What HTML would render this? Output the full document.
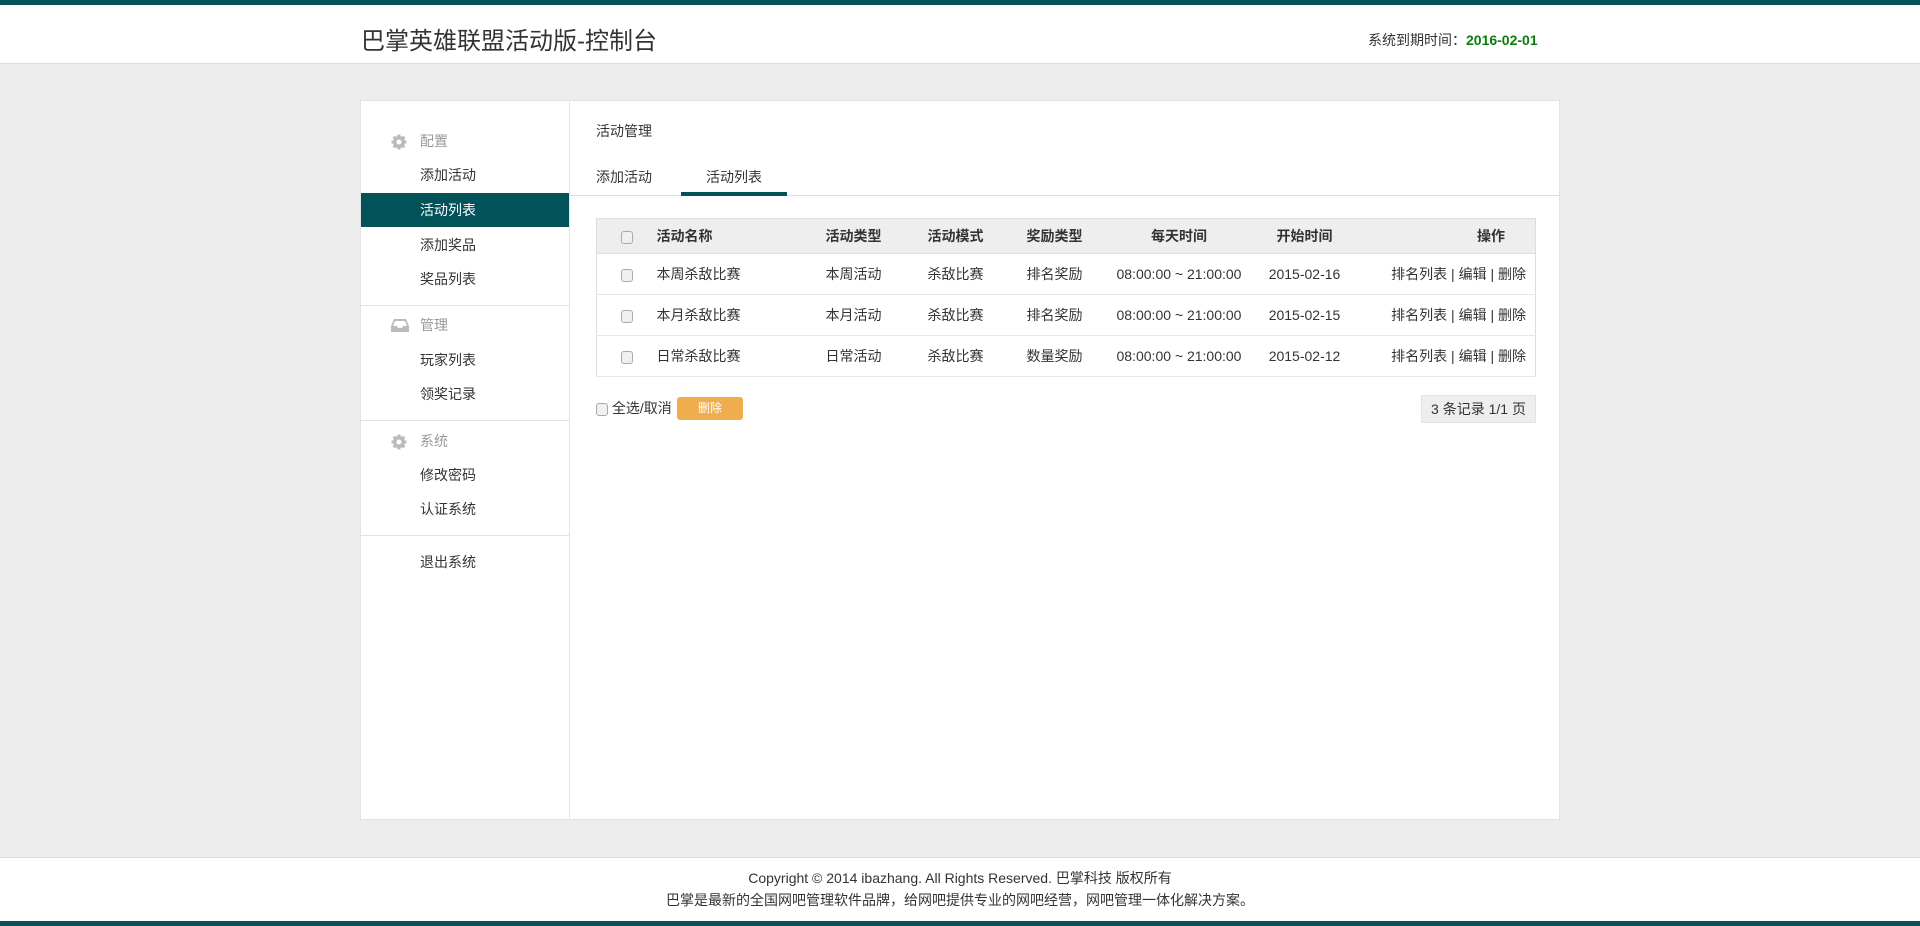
<!DOCTYPE html>
<html><head><meta charset="utf-8"><style>
*{margin:0;padding:0;box-sizing:border-box}
body{width:1920px;height:926px;background:#ededed;font-family:"Liberation Sans","Noto Sans CJK SC",sans-serif;color:#333;font-size:14px;position:relative;overflow:hidden}
.top{position:absolute;left:0;top:0;width:1920px;height:5px;background:#02525a}
.hdr{position:absolute;left:0;top:5px;width:1920px;height:59px;background:#fff;border-bottom:1px solid #ddd}
.title{position:absolute;left:361px;top:16px;font-size:24px;color:#333}
.exp{position:absolute;left:1368px;top:25px;font-size:14px;color:#333}
.exp b{color:#0a7d0a}
.panel{position:absolute;left:360px;top:100px;width:1200px;height:720px;background:#fff;border:1px solid #e2e2e2}
.side{position:absolute;left:0;top:0;width:209px;height:718px;border-right:1px solid #e2e2e2}
.si{position:absolute;left:0;width:208px;height:34px;line-height:34px;padding-left:59px;font-size:14px;color:#333}
.si.h{color:#999}
.si.act{background:#02525a;color:#fff}
.div{position:absolute;left:0;width:208px;height:1px;background:#e2e2e2}
.ic{position:absolute;left:30px;top:10px}
.abs{position:absolute}
table{position:absolute;left:235px;top:117px;width:940px;border-collapse:collapse;border:1px solid #ddd;font-size:14px}
th{background:#eee;height:35px;font-weight:bold;text-align:left;border-bottom:1px solid #ddd}
td{height:41px;border-bottom:1px solid #e6e6e6}
.cb{display:inline-block;width:12px;height:13px;border:1px solid #aaa;border-radius:3px;background:#f0f0f0;vertical-align:middle}
.foot{position:absolute;left:0;top:857px;width:1920px;height:64px;background:#fff;border-top:1px solid #ddd;text-align:center;font-size:14px;color:#333;line-height:22px}
.bot{position:absolute;left:0;top:921px;width:1920px;height:5px;background:#02525a}
</style></head><body>
<div class="top"></div>
<div class="hdr"><div class="title">巴掌英雄联盟活动版-控制台</div><div class="exp">系统到期时间：<b>2016-02-01</b></div></div>
<div class="panel">
 <div class="side">
  <div class="si h" style="top:23px"><svg class="ic" width="16" height="16" viewBox="0 0 16 16"><circle cx="8" cy="8" r="6" fill="#bbb"/><g stroke="#bbb" stroke-width="3"><line x1="8" y1="0.5" x2="8" y2="15.5"/><line x1="0.5" y1="8" x2="15.5" y2="8"/><line x1="2.7" y1="2.7" x2="13.3" y2="13.3"/><line x1="13.3" y1="2.7" x2="2.7" y2="13.3"/></g><circle cx="8" cy="8" r="2.5" fill="#fff"/></svg>配置</div>
  <div class="si" style="top:57px">添加活动</div>
  <div class="si act" style="top:92px">活动列表</div>
  <div class="si" style="top:127px">添加奖品</div>
  <div class="si" style="top:161px">奖品列表</div>
  <div class="div" style="top:204px"></div>
  <div class="si h" style="top:207px"><svg class="ic" width="18" height="15" viewBox="0 0 18 15"><path d="M3 1h12l3 7v6H0V8z" fill="#bbb"/><path d="M4 3h10l2 5h-4l-1 2H7L6 8H2z" fill="#fff"/></svg>管理</div>
  <div class="si" style="top:242px">玩家列表</div>
  <div class="si" style="top:276px">领奖记录</div>
  <div class="div" style="top:319px"></div>
  <div class="si h" style="top:323px"><svg class="ic" width="16" height="16" viewBox="0 0 16 16"><circle cx="8" cy="8" r="6" fill="#bbb"/><g stroke="#bbb" stroke-width="3"><line x1="8" y1="0.5" x2="8" y2="15.5"/><line x1="0.5" y1="8" x2="15.5" y2="8"/><line x1="2.7" y1="2.7" x2="13.3" y2="13.3"/><line x1="13.3" y1="2.7" x2="2.7" y2="13.3"/></g><circle cx="8" cy="8" r="2.5" fill="#fff"/></svg>系统</div>
  <div class="si" style="top:357px">修改密码</div>
  <div class="si" style="top:391px">认证系统</div>
  <div class="div" style="top:434px"></div>
  <div class="si" style="top:444px">退出系统</div>
 </div>
 <div class="abs" style="left:235px;top:20px;font-size:14px">活动管理</div>
 <div class="abs" style="left:235px;top:66px">添加活动</div>
 <div class="abs" style="left:345px;top:66px">活动列表</div>
 <div class="abs" style="left:209px;top:94px;width:989px;height:1px;background:#ddd"></div>
 <div class="abs" style="left:320px;top:91px;width:106px;height:4px;background:#02525a"></div>
 <table>
  <tr><th style="width:60px;text-align:center"><span class="cb"></span></th><th style="width:169px">活动名称</th><th style="width:102px">活动类型</th><th style="width:99px">活动模式</th><th style="width:89px">奖励类型</th><th style="width:127px;text-align:center">每天时间</th><th style="width:124px;text-align:center">开始时间</th><th style="text-align:right;padding-right:30px">操作</th></tr>
  <tr><td style="text-align:center"><span class="cb"></span></td><td>本周杀敌比赛</td><td>本周活动</td><td>杀敌比赛</td><td>排名奖励</td><td style="text-align:center">08:00:00 ~ 21:00:00</td><td style="text-align:center">2015-02-16</td><td style="text-align:right;padding-right:9px">排名列表 | 编辑 | 删除</td></tr>
  <tr><td style="text-align:center"><span class="cb"></span></td><td>本月杀敌比赛</td><td>本月活动</td><td>杀敌比赛</td><td>排名奖励</td><td style="text-align:center">08:00:00 ~ 21:00:00</td><td style="text-align:center">2015-02-15</td><td style="text-align:right;padding-right:9px">排名列表 | 编辑 | 删除</td></tr>
  <tr><td style="text-align:center"><span class="cb"></span></td><td>日常杀敌比赛</td><td>日常活动</td><td>杀敌比赛</td><td>数量奖励</td><td style="text-align:center">08:00:00 ~ 21:00:00</td><td style="text-align:center">2015-02-12</td><td style="text-align:right;padding-right:9px">排名列表 | 编辑 | 删除</td></tr>
 </table>
 <div class="abs" style="left:235px;top:297px"><span class="cb"></span> 全选/取消</div>
 <div class="abs" style="left:316px;top:296px;width:66px;height:23px;background:#f0ad4e;border-radius:3px;color:#fff;font-size:12px;text-align:center;line-height:23px">删除</div>
 <div class="abs" style="left:1060px;top:294px;width:115px;height:28px;background:#eee;border:1px solid #e2e2e2;line-height:26px;text-align:center;font-size:14px">3 条记录 1/1 页</div>
</div>
<div class="foot"><div style="margin-top:9px">Copyright © 2014 ibazhang. All Rights Reserved. 巴掌科技 版权所有</div><div>巴掌是最新的全国网吧管理软件品牌，给网吧提供专业的网吧经营，网吧管理一体化解决方案。</div></div>
<div class="bot"></div>
</body></html>
